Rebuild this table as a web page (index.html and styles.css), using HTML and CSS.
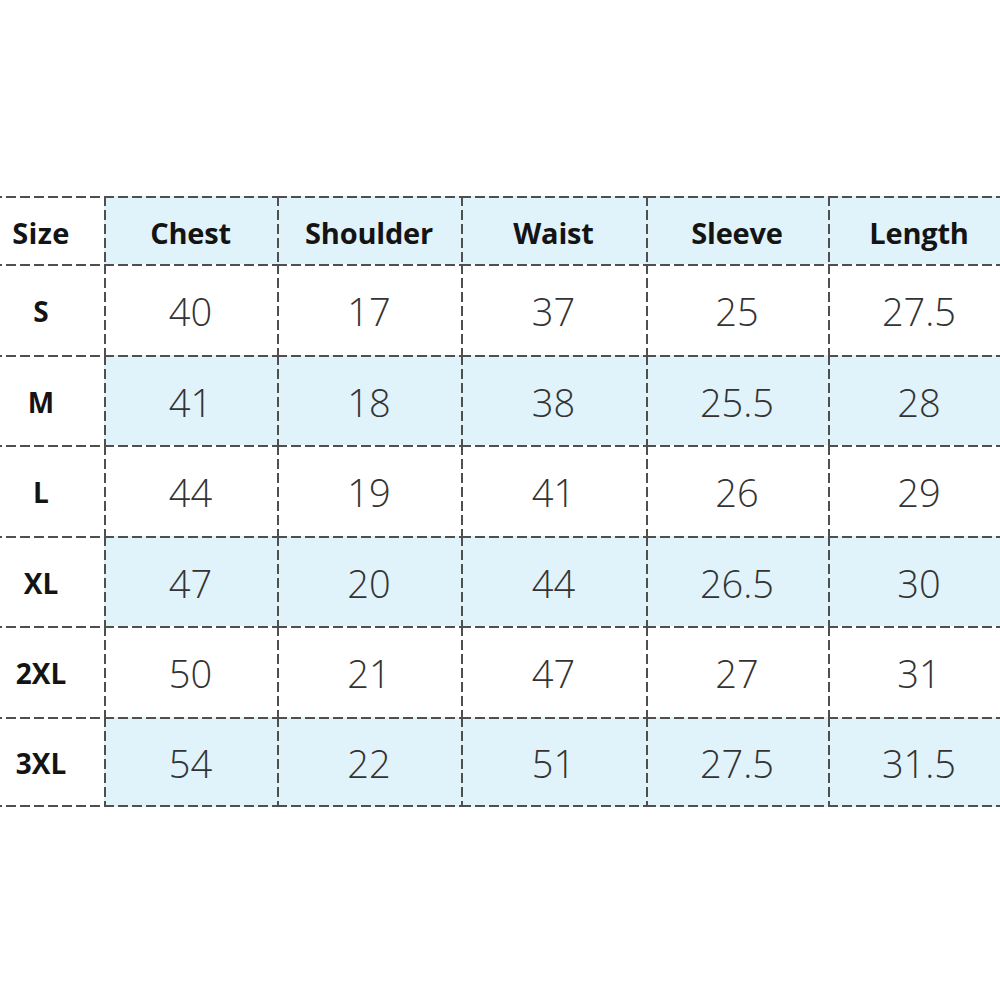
FILE: index.html
```html
<!DOCTYPE html>
<html lang="en">
<head>
<meta charset="utf-8">
<title>Size Chart</title>
<link rel="stylesheet" href="styles.css">
</head>
<body>
<main class="page">
  <table class="chart">
    <colgroup>
      <col class="c-size"><col class="c-chest"><col class="c-shoulder"><col class="c-waist"><col class="c-sleeve"><col class="c-length">
    </colgroup>
    <thead>
      <tr class="head">
        <th class="lbl">Size</th><th>Chest</th><th>Shoulder</th><th>Waist</th><th>Sleeve</th><th>Length</th>
      </tr>
    </thead>
    <tbody>
      <tr><th class="lbl">S</th><td>40</td><td>17</td><td>37</td><td>25</td><td>27.5</td></tr>
      <tr class="alt"><th class="lbl">M</th><td>41</td><td>18</td><td>38</td><td>25.5</td><td>28</td></tr>
      <tr><th class="lbl">L</th><td>44</td><td>19</td><td>41</td><td>26</td><td>29</td></tr>
      <tr class="alt"><th class="lbl">XL</th><td>47</td><td>20</td><td>44</td><td>26.5</td><td>30</td></tr>
      <tr><th class="lbl">2XL</th><td>50</td><td>21</td><td>47</td><td>27</td><td>31</td></tr>
      <tr class="alt last"><th class="lbl">3XL</th><td>54</td><td>22</td><td>51</td><td>27.5</td><td>31.5</td></tr>
    </tbody>
  </table>
</main>
</body>
</html>
```
FILE: styles.css
```css
html, body {
  margin: 0;
  padding: 0;
  background: #ffffff;
  overflow: hidden;
}

.page {
  padding-top: 196px;
}

.chart {
  margin-left: -22px;
  border-collapse: collapse;
  table-layout: fixed;
  width: 1032px;
  font-family: "Open Sans", "Noto Sans", "Liberation Sans", sans-serif;
}

.c-size { width: 126px; }
.c-chest { width: 173px; }
.c-shoulder { width: 184px; }
.c-waist { width: 185px; }
.c-sleeve { width: 182px; }
.c-length { width: 182px; }

.chart th,
.chart td {
  padding: 4px 0 0;
  text-align: center;
  vertical-align: middle;
  background-color: #ffffff;
  background-image:
    repeating-linear-gradient(to right, #4f4f4f 0 10px, transparent 10px 14px),
    repeating-linear-gradient(to bottom, #4f4f4f 0 10px, transparent 10px 14px);
  background-size: 100% 2px, 2px 100%;
  background-position: left top, left top;
  background-repeat: no-repeat;
}

.chart .lbl {
  background-image:
    repeating-linear-gradient(to right, #4f4f4f 0 10px, transparent 10px 14px);
  background-size: 100% 2px;
  background-position: left top;
}

.head th {
  height: 64px;
  font-size: 29px;
  font-weight: 700;
  color: #141414;
  letter-spacing: -0.2px;
}

.head th.lbl {
  letter-spacing: 0.3px;
}

.head th + th,
.alt td {
  background-color: #e0f2fa;
}

tbody tr {
  height: 90.5px;
}

tbody th.lbl {
  font-size: 28px;
  font-weight: 700;
  color: #141414;
}

tbody td {
  font-size: 38px;
  font-weight: 300;
  color: #333333;
}

tbody th,
tbody td {
  padding-top: 6px;
}

.last th,
.last td {
  border-bottom: 2px dashed transparent;
  background-image:
    repeating-linear-gradient(to right, #4f4f4f 0 10px, transparent 10px 14px),
    repeating-linear-gradient(to bottom, #4f4f4f 0 10px, transparent 10px 14px),
    repeating-linear-gradient(to right, #4f4f4f 0 10px, transparent 10px 14px);
  background-size: 100% 2px, 2px 100%, 100% 2px;
  background-position: left top, left top, left bottom;
  background-origin: border-box;
}

.last th.lbl {
  background-image:
    repeating-linear-gradient(to right, #4f4f4f 0 10px, transparent 10px 14px),
    repeating-linear-gradient(to right, #4f4f4f 0 10px, transparent 10px 14px);
  background-size: 100% 2px, 100% 2px;
  background-position: left top, left bottom;
}
```
